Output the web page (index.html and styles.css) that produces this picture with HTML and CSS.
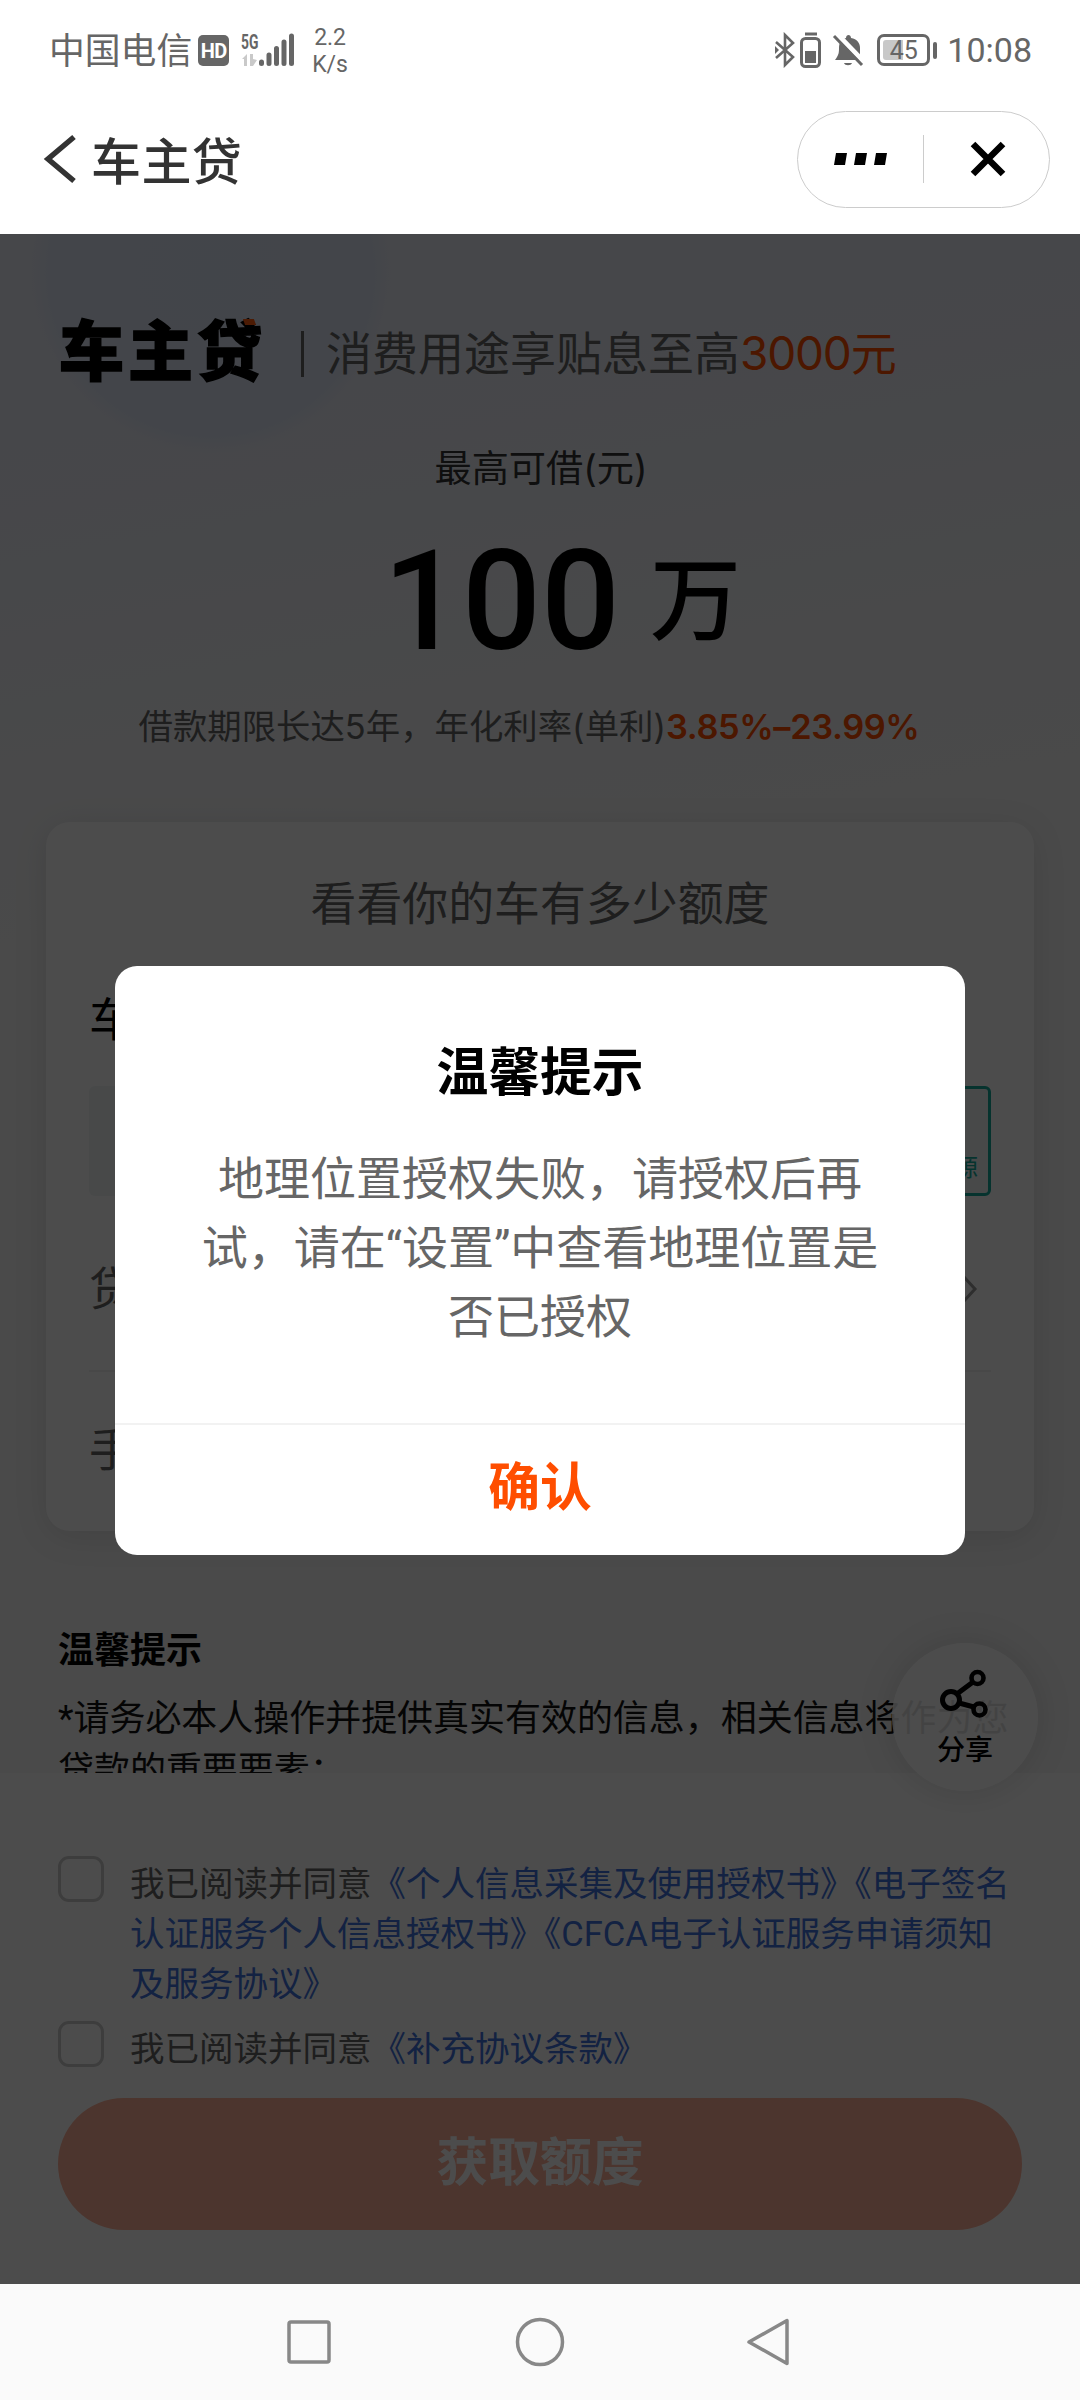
FILE: index.html
```html
<!DOCTYPE html>
<html lang="zh-CN">
<head>
<meta charset="utf-8">
<title>车主贷</title>
<link rel="stylesheet" href="styles.css">
</head>
<body>
<div class="screen">
  <header class="status">
    <div class="status-left">
      <span class="carrier">中国电信</span>
      <span class="hd">HD</span>
      <span class="signal">
        <span class="net">5G</span>
        <svg width="54" height="36" viewBox="0 0 54 36">
          <g fill="#c9c9c9"><path d="M1 27l5-5v12H3v-7zM9 22h3v5l4 1-4 6H9z"/></g>
          <g stroke="#666" stroke-width="5" stroke-linecap="round"><path d="M20.500 30v1.500M28 23v8.500M35.500 16.500v15M43 10v21.500M50.500 4v27.500"/></g>
        </svg>
      </span>
      <span class="speed">2.2<br>K/s</span>
    </div>
    <div class="status-right">
      <svg class="bt" width="22" height="36" viewBox="0 0 22 36"><path d="M1 10l17 15-8 8V3l8 8L1 26" fill="none" stroke="#666" stroke-width="2.600"/><path d="M0 14l4 4-4 4z" fill="#666"/></svg>
      <svg class="mini" width="24" height="38" viewBox="0 0 24 38"><path d="M6 3h12" stroke="#666" stroke-width="3"/><rect x="2.500" y="7.500" width="18" height="28" rx="4" fill="none" stroke="#666" stroke-width="3"/><rect x="6" y="20" width="11" height="12" fill="#666"/></svg>
      <svg class="bell" width="34" height="36" viewBox="0 0 34 36"><path d="M3 28c4-5 4-8 4-12 0-6 3-9 7-10 0-4 5-4 5 0 6 1 9 5 9 10v12zM12 31h8c-1 3-7 3-8 0z" fill="#666"/><path d="M5 2l28 29" stroke="#fff" stroke-width="5"/><path d="M2 4l28 29" stroke="#666" stroke-width="3"/></svg>
      <span class="battery"><span class="level">45</span></span>
      <span class="nub"></span>
      <span class="time">10:08</span>
    </div>
  </header>

  <nav class="titlebar">
    <svg class="back" width="34" height="50" viewBox="0 0 34 50"><path d="M31 3L5 25l26 22" fill="none" stroke="#333" stroke-width="5.500"/></svg>
    <h1>车主贷</h1>
    <div class="capsule">
      <svg class="more" width="56" height="16" viewBox="0 0 56 16"><path d="M3 2h11l-2 12H1zM23 2h11l-2 12H21zM43 2h11l-2 12H41z"/></svg>
      <span class="bar"></span>
      <svg class="close" width="38" height="38" viewBox="0 0 38 38"><path d="M4 4l30 30M34 4L4 34" stroke="#000" stroke-width="6.500"/></svg>
    </div>
  </nav>

  <main class="page">
    <section class="hero">
      <div class="brand">
        <span class="logo">车主贷<i></i></span>
        <span class="rule"></span>
        <span class="slogan">消费用途享贴息至高<em>3000元</em></span>
      </div>
      <p class="caption">最高可借(元)</p>
      <p class="amount"><span class="num">100</span><span class="unit">万</span></p>
      <p class="rate">借款期限长达5年，年化利率(单利)<b>3.85%–23.99%</b></p>
    </section>

    <section class="card">
      <h2>看看你的车有多少额度</h2>
      <p class="label strong">车</p>
      <div class="plates"><span class="plate"></span><span class="plate energy">源</span></div>
      <div class="row"><span class="label">贷</span>
        <svg width="18" height="30" viewBox="0 0 18 30"><path d="M3 3l11 12L3 27" fill="none" stroke="#999" stroke-width="3"/></svg>
      </div>
      <div class="row last"><span class="label">手</span></div>
    </section>

    <section class="tips">
      <h3>温馨提示</h3>
      <p>*请务必本人操作并提供真实有效的信息，相关信息将作为您贷款的重要要素：</p>
    </section>

    <section class="agree">
      <div class="check"><i class="box"></i><p>我已阅读并同意<a>《个人信息采集及使用授权书》《电子签名认证服务个人信息授权书》《CFCA电子认证服务申请须知及服务协议》</a></p></div>
      <div class="check"><i class="box"></i><p>我已阅读并同意<a>《补充协议条款》</a></p></div>
      <div class="submit">获取额度</div>
    </section>

    <div class="share">
      <svg width="52" height="52" viewBox="0 0 52 52" fill="none" stroke="#000"><circle cx="12" cy="31" r="8.500" stroke-width="5"/><circle cx="38.500" cy="9" r="6" stroke-width="4.600"/><circle cx="40.500" cy="40.500" r="6" stroke-width="4.600"/><path d="M18.500 24.500L34 13M20 34l15 4" stroke-width="5"/></svg>
      <span>分享</span>
    </div>

    <div class="mask">
      <div class="dialog">
        <h2>温馨提示</h2>
        <p>地理位置授权失败，请授权后再试，请在“设置”中查看地理位置是否已授权</p>
        <div class="confirm">确认</div>
      </div>
    </div>
  </main>

  <footer class="sysnav">
    <svg width="52" height="52" viewBox="0 0 52 52"><rect x="6" y="6" width="40" height="40" rx="2"/></svg>
    <svg width="52" height="52" viewBox="0 0 52 52"><circle cx="26" cy="26" r="22.500"/></svg>
    <svg width="52" height="52" viewBox="0 0 52 52"><path d="M42 4.500v43L4 26z" stroke-linejoin="round"/></svg>
  </footer>
</div>
</body>
</html>
```
FILE: styles.css
```css
* { box-sizing: border-box; margin: 0; padding: 0; }
body { background: #fff; font-family: Roboto, "Noto Sans CJK SC", sans-serif; }
svg { display: block; flex: none; }
.screen { width: 1080px; height: 2400px; display: flex; flex-direction: column; overflow: hidden; }

.status { height: 100px; padding: 0 48px 0 49px; display: flex; justify-content: space-between; color: #666; }
.status-left, .status-right { display: flex; align-items: center; }
.carrier { font-size: 35.800px; line-height: 48px; padding-top: 4px; white-space: nowrap; }
.hd { width: 31px; height: 31px; margin-left: 6px; border-radius: 5px; background: #666; color: #fff; font: bold 20px/32px Roboto, sans-serif; text-align: center; letter-spacing: -0.500px; }
.signal { position: relative; margin-left: 12px; width: 54px; }
.net { position: absolute; left: 0; top: 0; font: bold 21px/20px Roboto, sans-serif; transform: scaleX(.66); transform-origin: left; }
.speed { margin-left: 17px; font-size: 23px; line-height: 27px; text-align: center; padding-top: 2px; }
.bt { margin-right: 2px; }
.mini { margin-right: 9px; }
.bell { margin-right: 11px; }
.battery { width: 53px; height: 32px; padding: 3px; border: 3px solid #666; border-radius: 7px; display: flex; }
.level { width: 41px; background: linear-gradient(90deg, #c8c8c8 50%, transparent 50%); font-size: 25px; line-height: 21px; text-align: center; border-radius: 3px; }
.nub { width: 4px; height: 17px; margin-left: 3px; border-radius: 2px; background: #666; }
.time { margin-left: 10px; font-size: 34px; }

.titlebar { height: 134px; padding: 0 30px 16px 43px; display: flex; align-items: center; color: #333; }
.titlebar h1 { margin-left: 14px; padding-top: 7px; font-size: 50px; font-weight: 500; line-height: 60px; letter-spacing: 0.400px; }
.capsule { margin-left: auto; width: 253px; height: 97px; border: 1px solid #ccc; border-radius: 49px; display: flex; align-items: center; }
.more { margin-left: 35px; }
.bar { width: 1px; height: 48px; margin-left: 34px; background: #ccc; }
.close { margin-left: 45px; }

.page { position: relative; height: 2050px; overflow: hidden; display: flex; flex-direction: column;
  background: radial-gradient(circle at 211px 40px, #dee6f8 0, #e0e7f8 160px, rgba(224,231,248,0) 180px), linear-gradient(170deg, #e9edf7 0, #edeff7 280px, #f4f5f7 560px, #f7f7f7 700px); }
.hero { height: 588px; }
.brand { display: flex; align-items: center; padding: 75px 0 0 59px; height: 164px; white-space: nowrap; }
.logo { position: relative; padding-bottom: 14px; font: 900 65px/66px "Noto Sans CJK SC", sans-serif; letter-spacing: 4px; color: #000; -webkit-text-stroke: 1.500px #000; }
.logo i { position: absolute; right: 11px; top: 5px; width: 11px; height: 6px; background: #ff5a10; transform: skewX(20deg); }
.rule { width: 3px; height: 46px; margin-left: 35px; background: #666; }
.slogan { margin-left: 22px; padding-bottom: 2px; font: 46px/60px Inter, "Noto Sans CJK SC", sans-serif; color: #666; }
.slogan em { font-style: normal; letter-spacing: -1.200px; color: #ff4e00; }
.caption { margin-top: 44px; padding-left: 2px; font: 37.200px/54px Inter, "Noto Sans CJK SC", sans-serif; text-align: center; color: #333; }
.amount { display: flex; align-items: center; justify-content: center; margin-top: 24px; padding-left: 44px; height: 150px; line-height: 150px; color: #000; }
.num { padding-top: 14px; font-size: 139px; font-weight: 500; }
.unit { margin-left: 30px; padding-top: 14px; font-size: 91px; font-weight: 500; }
.rate { margin-top: 31px; padding-right: 22px; font: 34.400px/52px Inter, "Noto Sans CJK SC", sans-serif; text-align: center; white-space: nowrap; color: #666; }
.rate b { font-weight: 600; letter-spacing: -0.400px; color: #ff4e00; }

.card { flex: none; width: 988px; height: 709px; margin: 0 46px; padding: 0 43px; border-radius: 24px; background: #fff; box-shadow: 0 6px 34px rgba(0,0,0,.1); }
.card h2 { padding-top: 48px; font-size: 45.900px; line-height: 68px; font-weight: 400; text-align: center; color: #666; }
.label { font-size: 46px; line-height: 68px; color: #666; }
.strong { margin-top: 48px; color: #000; }
.plates { margin-top: 32px; display: flex; justify-content: space-between; }
.plate { width: 90px; height: 110px; border-radius: 6px; background: #f0f6f6; }
.energy { border: 3px solid #14ab9a; padding: 62px 10px 0 0; text-align: right; font-size: 24px; line-height: 34px; color: #14ab9a; background: #f0f6f6; }
.row { height: 176px; padding: 12px 12px 0 0; display: flex; align-items: center; justify-content: space-between; border-bottom: 2px solid #f2f2f2; }
.row.last { border: 0; height: 150px; padding-top: 6px; }

.tips { height: 242px; padding: 96px 56px 0 58px; color: #000; overflow: hidden; }
.tips h3 { font-size: 36px; line-height: 48px; }
.tips p { margin-top: 18px; font-size: 36px; line-height: 52px; letter-spacing: -0.040px; color: #111; }

.agree { flex: 1; background: #fff; padding: 83px 58px 0; }
.check { display: flex; align-items: flex-start; margin-bottom: 12px; }
.box { flex: none; width: 46px; height: 46px; border: 3px solid #ccc; border-radius: 11px; }
.check p { margin-left: 26px; padding-top: 3px; font-size: 34.500px; line-height: 50px; color: #666; }
.check a { color: #4272de; }
.submit { height: 132px; margin-top: 24px; padding-top: 3px; border-radius: 66px; background: #ffb199; color: #fff; font-size: 51.800px; font-weight: 700; line-height: 126px; text-align: center; }

.share { position: absolute; left: 892px; top: 1409px; width: 146px; height: 148px; border-radius: 50%; background: rgba(255,255,255,.88); box-shadow: 0 0 36px rgba(0,0,0,.13); display: flex; flex-direction: column; align-items: center; padding-top: 26px; }
.share span { margin-top: 10px; font-size: 28px; line-height: 40px; font-weight: 500; color: #000; }

.mask { position: absolute; inset: 0; background: rgba(0,0,0,.7); }
.dialog { width: 850px; height: 589px; margin: 731.500px 0 0 115px; border-radius: 22px; background: #fff; text-align: center; display: flex; flex-direction: column; }
.dialog h2 { padding-top: 70px; font-size: 51.800px; line-height: 76px; color: #000; }
.dialog p { padding: 33px 80px 0; font-size: 46px; line-height: 69px; color: #666; }
.confirm { margin-top: auto; height: 132px; padding-top: 2px; border-top: 2px solid #f2f2f2; font-size: 51.800px; font-weight: 700; line-height: 123px; color: #ff4e00; }

.sysnav { flex: 1; background: #fafafa; display: flex; justify-content: center; align-items: center; gap: 179px; }
.sysnav svg { fill: none; stroke: #888; stroke-width: 3.500; }
```
